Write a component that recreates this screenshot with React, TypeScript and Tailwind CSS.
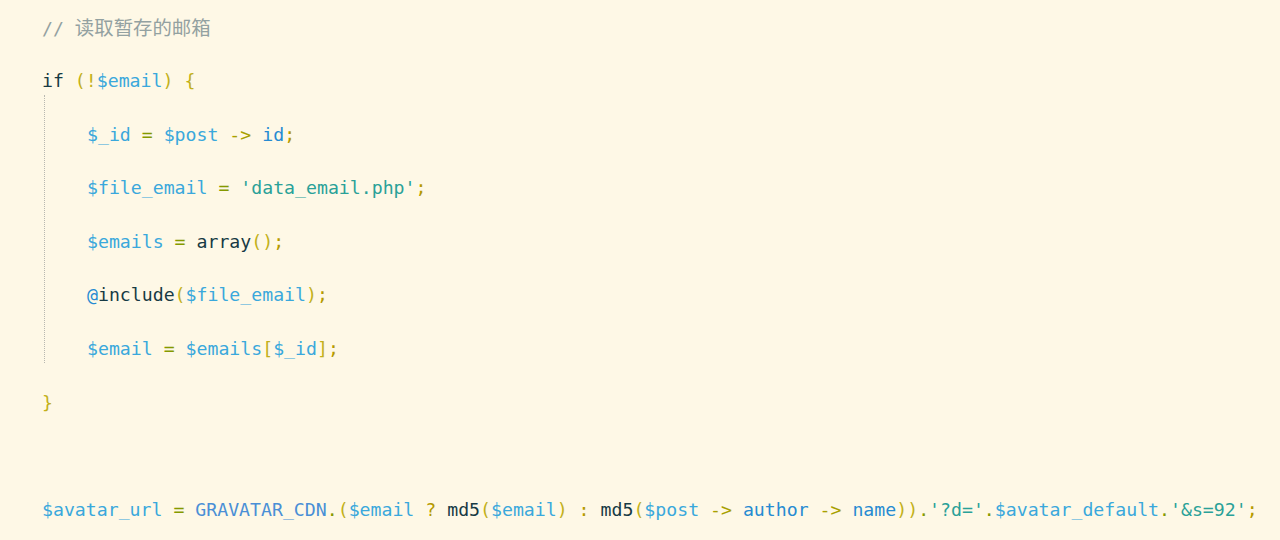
type Tok = [string, string];

const c = {
  cm: "text-[#93a1a1]",
  kw: "text-[#173a44]",
  vr: "text-[#3aa8dc]",
  pr: "text-[#268bd2]",
  op: "text-[#859900]",
  ar: "text-[#a8a000]",
  pn: "text-[#c2b01a]",
  sm: "text-[#b59a00]",
  st: "text-[#2aa198]",
  cn: "text-[#4a8fd6]",
};

const Line = ({ toks }: { toks: Tok[] }) => (
  <div className="h-[26.8px] leading-[26.8px] whitespace-pre">
    {toks.map(([t, cls], i) => (
      <span key={i} className={cls}>
        {t}
      </span>
    ))}
  </div>
);

const Blank = () => <div className="h-[26.8px]" />;

const inner: Tok[][] = [
  [["$_id", c.vr], [" = ", c.op], ["$post", c.vr], [" -> ", c.ar], ["id", c.pr], [";", c.sm]],
  [["$file_email", c.vr], [" = ", c.op], ["'data_email.php'", c.st], [";", c.sm]],
  [["$emails", c.vr], [" = ", c.op], ["array", c.kw], ["()", c.pn], [";", c.sm]],
  [["@", c.pr], ["include", c.kw], ["(", c.pn], ["$file_email", c.vr], [")", c.pn], [";", c.sm]],
  [["$email", c.vr], [" = ", c.op], ["$emails", c.vr], ["[", c.pn], ["$_id", c.vr], ["]", c.pn], [";", c.sm]],
];

export default function App() {
  return (
    <div className="w-[1280px] h-[540px] overflow-hidden bg-[#fef8e6] pt-[14.4px] pl-[42px] font-['DejaVu_Sans_Mono',monospace] text-[18.2px]">
      <div className="h-[26.8px] leading-[26.8px] whitespace-pre text-[#93a1a1]">
        <span>// </span>
        <span className="font-['Noto_Sans_CJK_SC',sans-serif] text-[19.4px]">读取暂存的邮箱</span>
      </div>
      <Blank />
      <Line toks={[["if", c.kw], [" ", c.kw], ["(", c.pn], ["!", c.pn], ["$email", c.vr], [")", c.pn], [" ", c.kw], ["{", c.pn]]} />
      <div className="ml-[2px] border-l border-dotted border-[#b8b8b0] pl-[42px]">
        <Blank />
        {inner.map((t, i) => (
          <div key={i}>
            <Line toks={t} />
            {i < inner.length - 1 && <Blank />}
          </div>
        ))}
      </div>
      <Blank />
      <Line toks={[["}", c.pn]]} />
      <Blank />
      <Blank />
      <Blank />
      <Line
        toks={[
          ["$avatar_url", c.vr],
          [" = ", c.op],
          ["GRAVATAR_CDN", c.cn],
          [".", c.op],
          ["(", c.pn],
          ["$email", c.vr],
          [" ? ", c.sm],
          ["md5", c.kw],
          ["(", c.pn],
          ["$email", c.vr],
          [")", c.pn],
          [" : ", c.sm],
          ["md5", c.kw],
          ["(", c.pn],
          ["$post", c.vr],
          [" -> ", c.ar],
          ["author", c.pr],
          [" -> ", c.ar],
          ["name", c.pr],
          ["))", c.pn],
          [".", c.op],
          ["'?d='", c.st],
          [".", c.op],
          ["$avatar_default", c.vr],
          [".", c.op],
          ["'&s=92'", c.st],
          [";", c.sm],
        ]}
      />
    </div>
  );
}
